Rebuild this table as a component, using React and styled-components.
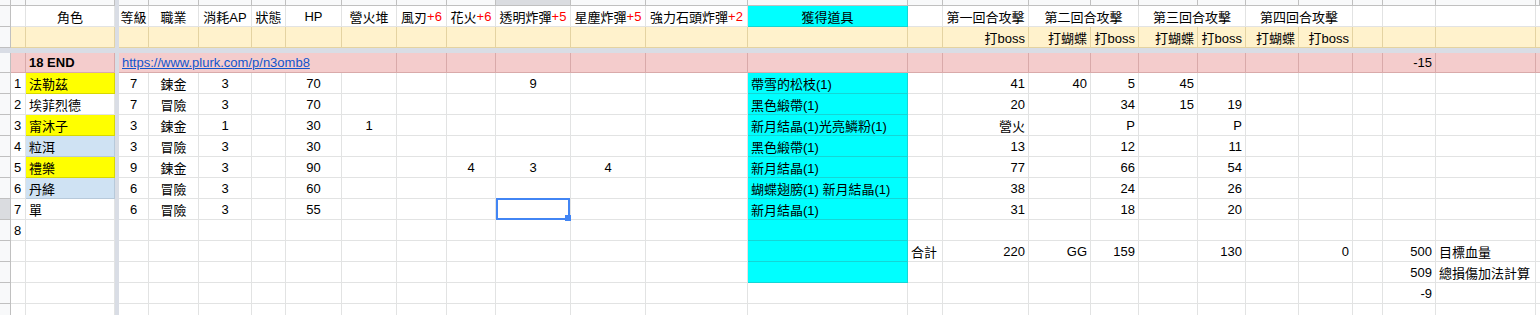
import React from 'react'
import styled, { createGlobalStyle } from 'styled-components'

const GlobalStyle = createGlobalStyle`
    body {
        margin: 0;
        background: #ffffff;
        overflow: hidden;
    }
    * {
        box-sizing: border-box;
    }
`

const COLS =
    '11px 15px 89px 4px 30px 50px 53px 34px 56px 55px 50px 49px 75px 75px 102px 160px 35px 86px 62px 48px 59px 48px 53px 54px 30px 53px 100px 4px'

const GRID = '#e2e3e3'
const YELLOW_ROW = '#fff2cc'
const YELLOW_LINE = '#e4d3a2'
const PINK_ROW = '#f4cccc'
const PINK_LINE = '#d9aaaa'
const CYAN = '#00ffff'
const CYAN_LINE = '#14d6d6'

const Sheet = styled.div`
    width: 1540px;
    height: 315px;
    overflow: hidden;
    font-family: 'Liberation Sans', Arial, 'Noto Sans CJK TC', sans-serif;
    font-size: 13px;
    color: #000000;
`

const Row = styled.div`
    display: grid;
    grid-template-columns: ${COLS};
    height: ${(p) => p.$h || 21}px;
`

const HeadCell = styled.div`
    background: ${(p) => (p.$active ? '#dadce0' : '#f8f9fa')};
    border-right: 1px solid #c0c0c0;
    border-bottom: 1px solid #c0c0c0;
`

const Divider = styled.div`
    background: #d9dde5;
`

const HLine = styled.div`
    grid-column: 1 / -1;
    background: #d9dde5;
`

const Cell = styled.div`
    position: relative;
    display: flex;
    align-items: center;
    justify-content: ${(p) =>
        p.$align === 'right' ? 'flex-end' : p.$align === 'center' ? 'center' : 'flex-start'};
    padding: 0 3px;
    white-space: nowrap;
    background: ${(p) => p.$bg || '#ffffff'};
    border-right: 1px solid ${(p) => p.$line || GRID};
    border-bottom: 1px solid ${(p) => p.$line || GRID};
    font-weight: ${(p) => (p.$bold ? 700 : 400)};
    grid-column: ${(p) => (p.$span ? `span ${p.$span}` : 'auto')};
`

const Plus = styled.span`
    color: #ff0000;
`

const Link = styled.span`
    color: #1155cc;
    text-decoration: underline;
`

const Selection = styled.div`
    position: absolute;
    top: -1px;
    left: 0;
    right: 0;
    bottom: -1px;
    border: 2px solid #4285f4;
    z-index: 2;
`

const Handle = styled.div`
    position: absolute;
    right: -3px;
    bottom: -3px;
    width: 6px;
    height: 6px;
    background: #4285f4;
`

// alignment of data columns 4..27
const ALIGN = [
    'center', 'center', 'center', 'center', 'center', 'center', 'center',
    'center', 'center', 'center', 'center', 'left', 'left',
    'right', 'right', 'right', 'right', 'right', 'right', 'right', 'right', 'right', 'left', 'left',
]

const headers = [
    '等級', '職業', '消耗AP', '狀態', 'HP', '營火堆',
    ['風刃', '+6'], ['花火', '+6'], ['透明炸彈', '+5'], ['星塵炸彈', '+5'], ['強力石頭炸彈', '+2'],
]

const subHeaders = ['打boss', '打蝴蝶', '打boss', '打蝴蝶', '打boss', '打蝴蝶', '打boss']

const people = [
    { n: '1', name: '法勒茲', bg: '#ffff00', line: '#d8d800', v: { 4: '7', 5: '鍊金', 6: '3', 8: '70', 12: '9', 15: '帶雪的松枝(1)', 17: '41', 18: '40', 19: '5', 20: '45' } },
    { n: '2', name: '埃菲烈德', v: { 4: '7', 5: '冒險', 6: '3', 8: '70', 15: '黑色緞帶(1)', 17: '20', 19: '34', 20: '15', 21: '19' } },
    { n: '3', name: '甯沐子', bg: '#ffff00', line: '#d8d800', v: { 4: '3', 5: '鍊金', 6: '1', 8: '30', 9: '1', 15: '新月結晶(1)光亮鱗粉(1)', 17: '營火', 19: 'P', 21: 'P' } },
    { n: '4', name: '粒洱', bg: '#cfe2f3', line: '#b7c9da', v: { 4: '3', 5: '冒險', 6: '3', 8: '30', 15: '黑色緞帶(1)', 17: '13', 19: '12', 21: '11' } },
    { n: '5', name: '禮樂', bg: '#ffff00', line: '#d8d800', v: { 4: '9', 5: '鍊金', 6: '3', 8: '90', 11: '4', 12: '3', 13: '4', 15: '新月結晶(1)', 17: '77', 19: '66', 21: '54' } },
    { n: '6', name: '丹絳', bg: '#cfe2f3', line: '#b7c9da', v: { 4: '6', 5: '冒險', 6: '3', 8: '60', 15: '蝴蝶翅膀(1) 新月結晶(1)', 17: '38', 19: '24', 21: '26' } },
    { n: '7', name: '單', active: true, sel: 12, v: { 4: '6', 5: '冒險', 6: '3', 8: '55', 15: '新月結晶(1)', 17: '31', 19: '18', 21: '20' } },
    { n: '8', cyan: true, v: {} },
    { cyan: true, v: { 16: '合計', 17: '220', 18: 'GG', 19: '159', 21: '130', 23: '0', 25: '500', 26: '目標血量' } },
    { cyan: true, v: { 25: '509', 26: '總損傷加法計算' } },
    { v: { 25: '-9' } },
    { v: {} },
]

const dataCols = Array.from({ length: 24 }, (_, i) => i + 4)

function TopStrip() {
    return (
        <Row $h={6}>
            <HeadCell />
            <HeadCell />
            <HeadCell />
            <Divider />
            {dataCols.map((c) => (
                <HeadCell key={c} $active={c === 12} />
            ))}
        </Row>
    )
}

function TitleRow() {
    return (
        <Row>
            <HeadCell />
            <Cell />
            <Cell $align="center">角色</Cell>
            <Divider />
            {headers.map((h, i) => (
                <Cell key={i} $align="center">
                    {Array.isArray(h) ? (
                        <>
                            {h[0]}
                            <Plus>{h[1]}</Plus>
                        </>
                    ) : (
                        h
                    )}
                </Cell>
            ))}
            <Cell $align="center" $bg={CYAN} $line={CYAN_LINE}>獲得道具</Cell>
            <Cell />
            <Cell $align="center">第一回合攻擊</Cell>
            <Cell $align="center" $span={2}>第二回合攻擊</Cell>
            <Cell $align="center" $span={2}>第三回合攻擊</Cell>
            <Cell $align="center" $span={2}>第四回合攻擊</Cell>
            <Cell />
            <Cell />
            <Cell />
            <Cell />
        </Row>
    )
}

function SubRow() {
    return (
        <Row>
            <HeadCell />
            <Cell $bg={YELLOW_ROW} $line={YELLOW_LINE} />
            <Cell $bg={YELLOW_ROW} $line={YELLOW_LINE} />
            <Divider />
            {dataCols.map((c) => (
                <Cell key={c} $align="right" $bg={YELLOW_ROW} $line={YELLOW_LINE}>
                    {c >= 17 && c <= 23 ? subHeaders[c - 17] : ''}
                </Cell>
            ))}
        </Row>
    )
}

function EndRow() {
    return (
        <Row $h={20}>
            <HeadCell />
            <Cell $bg={PINK_ROW} $line={PINK_LINE} />
            <Cell $bg={PINK_ROW} $line={PINK_LINE} $bold>
                18 END
            </Cell>
            <Divider />
            <Cell $bg={PINK_ROW} $line={PINK_LINE} $span={6}>
                <Link>https://www.plurk.com/p/n3omb8</Link>
            </Cell>
            {dataCols
                .filter((c) => c >= 10)
                .map((c) => (
                    <Cell key={c} $align="right" $bg={PINK_ROW} $line={PINK_LINE}>
                        {c === 25 ? '-15' : ''}
                    </Cell>
                ))}
        </Row>
    )
}

function PersonRow({ p }) {
    return (
        <Row>
            <HeadCell $active={p.active} />
            <Cell>{p.n}</Cell>
            <Cell $bg={p.bg} $line={p.line}>
                {p.name}
            </Cell>
            <Divider />
            {dataCols.map((c) => {
                const cyan = c === 15 && (p.name || p.cyan)
                return (
                    <Cell
                        key={c}
                        $align={ALIGN[c - 4]}
                        $bg={cyan ? CYAN : undefined}
                        $line={cyan ? CYAN_LINE : undefined}
                    >
                        {p.v[c] || ''}
                        {p.sel === c && (
                            <Selection>
                                <Handle />
                            </Selection>
                        )}
                    </Cell>
                )
            })}
        </Row>
    )
}

export default function App() {
    return (
        <Sheet>
            <GlobalStyle />
            <TopStrip />
            <TitleRow />
            <SubRow />
            <Row $h={5}>
                <HLine />
            </Row>
            <EndRow />
            {people.map((p, i) => (
                <PersonRow key={i} p={p} />
            ))}
        </Sheet>
    )
}
